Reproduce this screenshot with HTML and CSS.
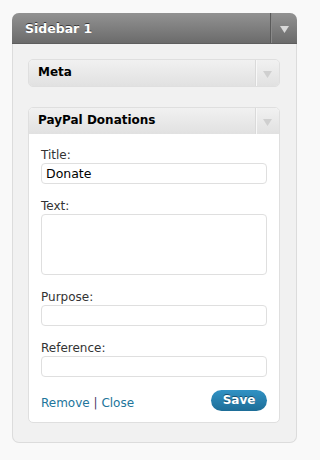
FILE: index.html
```html
<!DOCTYPE html>
<html>
<head>
<meta charset="utf-8">
<link rel="stylesheet" href="styles.css">
</head>
<body>
<div class="sidebar">
  <div class="sidebar-head">
    <div class="sidebar-title">Sidebar 1</div>
    <div class="sidebar-handle"><svg width="9" height="7" viewBox="0 0 9 7"><path d="M0 0H9L4.5 7Z" fill="#d8d8d8"/></svg></div>
  </div>
  <div class="sidebar-body">
    <div class="widget">
      <div class="widget-head">
        <div class="widget-title">Meta</div>
        <div class="widget-handle"><svg width="9" height="7" viewBox="0 0 9 7"><path d="M0 0H9L4.5 7Z" fill="#cfcfcf"/></svg></div>
      </div>
    </div>
    <div class="widget open">
      <div class="widget-head">
        <div class="widget-title">PayPal Donations</div>
        <div class="widget-handle"><svg width="9" height="7" viewBox="0 0 9 7"><path d="M0 0H9L4.5 7Z" fill="#cfcfcf"/></svg></div>
      </div>
      <div class="widget-body">
        <div class="field">
          <label class="label">Title:</label>
          <div class="input">Donate</div>
        </div>
        <div class="field">
          <label class="label">Text:</label>
          <div class="input textarea"></div>
        </div>
        <div class="field">
          <label class="label">Purpose:</label>
          <div class="input"></div>
        </div>
        <div class="field">
          <label class="label">Reference:</label>
          <div class="input"></div>
        </div>
        <div class="actions">
          <div class="links"><a class="link">Remove</a> <span class="sep">|</span> <a class="link">Close</a></div>
          <div class="save">Save</div>
        </div>
      </div>
    </div>
  </div>
</div>
</body>
</html>
```
FILE: styles.css
```css
* { box-sizing: border-box; }
html, body { margin: 0; }
body {
  background: #f9f9f9;
  padding: 13px 0 0 12px;
  font-family: "DejaVu Sans", Verdana, sans-serif;
  font-size: 12px;
  color: #333;
}
.sidebar {
  width: 285px;
  background: #f1f1f1;
  border: 1px solid #dcdcdc;
  border-top: 0;
  border-radius: 7px;
}
.sidebar-head {
  display: flex;
  height: 31px;
  margin: 0 -1px;
  background: linear-gradient(#929292, #6b6b6b);
  border-radius: 7px 7px 0 0;
  border-bottom: 1px solid #5e5e5e;
}
.sidebar-title {
  flex: 1;
  padding: 8px 0 0 13px;
  font-weight: bold;
  font-size: 12.5px;
  color: #fff;
  text-shadow: 0 -1px 0 #3a3a3a;
}
.sidebar-handle {
  width: 27px;
  border-left: 1px solid #5a5a5a;
  box-shadow: inset 1px 0 0 #8a8a8a;
  display: flex;
  align-items: center;
  justify-content: center;
  padding-top: 2px;
}
.sidebar-body {
  padding: 15px 16px 19px 15px;
}
.widget {
  border: 1px solid #dfdfdf;
  border-radius: 5px;
  background: #fff;
  overflow: hidden;
}
.widget + .widget { margin-top: 20px; }
.widget-head {
  display: flex;
  height: 26px;
  background: linear-gradient(#f1f1f1, #e1e1e1);
}
.widget-title {
  flex: 1;
  padding: 5px 0 0 9px;
  font-weight: bold;
  color: #000;
}
.widget-handle {
  width: 24px;
  border-left: 1px solid #dadada;
  box-shadow: inset 1px 0 0 #f8f8f8;
  display: flex;
  align-items: center;
  justify-content: center;
  padding-top: 3px;
}
.widget-body {
  padding: 13px 12px 11px;
}
.field + .field { margin-top: 14px; }
.label {
  display: block;
  line-height: 16px;
  color: #333;
}
.input {
  height: 21px;
  border: 1px solid #dfdfdf;
  border-radius: 4px;
  background: #fff;
  padding: 1px 4px 0;
  line-height: 18px;
  color: #000;
  font-size: 12.5px;
}
.input.textarea { height: 61px; }
.actions {
  display: flex;
  justify-content: space-between;
  align-items: flex-end;
  margin-top: 13px;
}
.links { line-height: 16px; }
.link { color: #21759b; text-decoration: none; }
.sep { color: #4a3c6a; }
.save {
  width: 56px;
  height: 21px;
  border-radius: 11px;
  background: linear-gradient(#3192c4, #1d6d97);
  color: #fff;
  font-weight: bold;
  text-align: center;
  line-height: 20px;
  text-shadow: 0 -1px 0 #164f6e;
}
```
